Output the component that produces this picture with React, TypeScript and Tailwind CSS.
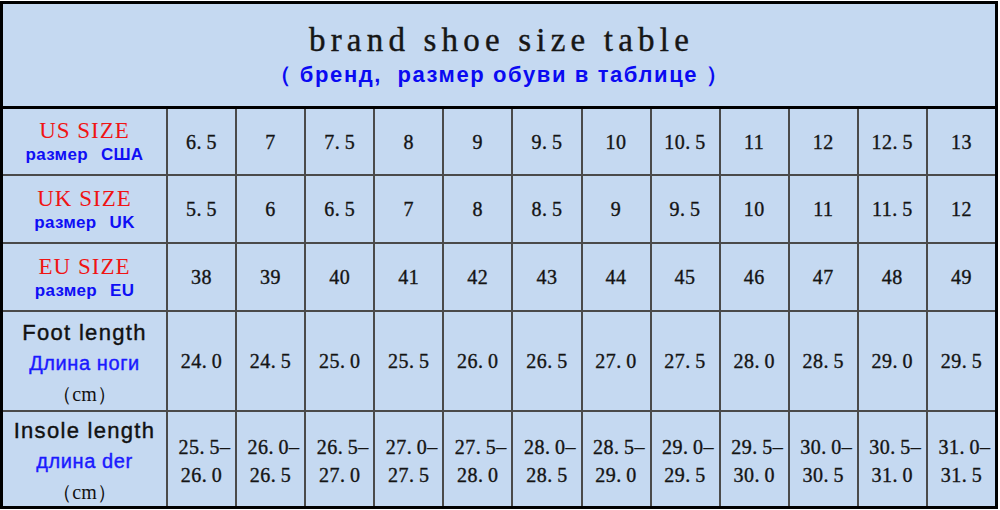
const serif = { fontFamily: '"Liberation Serif", "DejaVu Serif", serif' };
const sans = { fontFamily: '"Liberation Sans", Arial, sans-serif' };

type Row = {
  label: string;
  ru: string;
  ruTail: string;
  values: string[];
};

const sizeRows: Row[] = [
  {
    label: 'US SIZE',
    ru: 'размер',
    ruTail: 'США',
    values: ['6.5', '7', '7.5', '8', '9', '9.5', '10', '10.5', '11', '12', '12.5', '13'],
  },
  {
    label: 'UK SIZE',
    ru: 'размер',
    ruTail: 'UK',
    values: ['5.5', '6', '6.5', '7', '8', '8.5', '9', '9.5', '10', '11', '11.5', '12'],
  },
  {
    label: 'EU SIZE',
    ru: 'размер',
    ruTail: 'EU',
    values: ['38', '39', '40', '41', '42', '43', '44', '45', '46', '47', '48', '49'],
  },
];

const footLength = ['24.0', '24.5', '25.0', '25.5', '26.0', '26.5', '27.0', '27.5', '28.0', '28.5', '29.0', '29.5'];

const insoleLength = [
  ['25.5', '26.0'],
  ['26.0', '26.5'],
  ['26.5', '27.0'],
  ['27.0', '27.5'],
  ['27.5', '28.0'],
  ['28.0', '28.5'],
  ['28.5', '29.0'],
  ['29.0', '29.5'],
  ['29.5', '30.0'],
  ['30.0', '30.5'],
  ['30.5', '31.0'],
  ['31.0', '31.5'],
];

// the dot gets its own cell width, like the half-width SimSun period in the source sheet
function Num({ value }: { value: string }) {
  const [whole, frac] = value.split('.');
  if (frac === undefined) return <>{whole}</>;
  return (
    <>
      {whole}
      <span className="inline-block w-[10px]">.</span>
      {frac}
    </>
  );
}

function Cell({ children, className = '' }: { children: React.ReactNode; className?: string }) {
  return (
    <div
      className={`bg-[#c5d9f1] flex items-center justify-center text-[20px] text-[#141414] tracking-[0.5px] [-webkit-text-stroke:0.35px_#141414] ${className}`}
      style={serif}
    >
      {children}
    </div>
  );
}

function LengthLabel({ title, ru }: { title: string; ru: string }) {
  return (
    <div className="bg-[#c5d9f1] flex flex-col items-center justify-center pt-[4px]" style={sans}>
      <div className="text-[22px] leading-[29px] tracking-[1.3px] text-[#111] [-webkit-text-stroke:0.4px_#111]">
        {title}
      </div>
      <div className="text-[20px] leading-[32px] tracking-[0.6px] text-[#1a1aff] [-webkit-text-stroke:0.4px_#1a1aff]">
        {ru}
      </div>
      <div className="text-[20px] leading-[30px] text-[#111]" style={serif}>
        （cm）
      </div>
    </div>
  );
}

export default function App() {
  return (
    <div className="w-[1000px] h-[510px] bg-white pt-[1px]">
      <div className="w-[998px] h-[508px] border-[3px] border-black flex flex-col bg-[#4a4a4a]">
        {/* Title */}
        <div className="h-[102px] bg-[#c5d9f1] flex flex-col items-center pt-[17px]">
          <div
            className="text-[33px] leading-[38px] tracking-[5.2px] pl-[5px] text-[#161616] [-webkit-text-stroke:0.4px_#161616]"
            style={serif}
          >
            brand shoe size table
          </div>
          <div
            className="mt-[2px] text-[22px] leading-[28px] font-bold text-[#0a0af2] tracking-[1.6px] whitespace-pre"
            style={sans}
          >
            {'（ бренд,  размер обуви в таблице ）'}
          </div>
        </div>
        <div className="h-[3px] bg-black" />

        <div className="flex-1 grid grid-cols-[163px_repeat(12,1fr)] grid-rows-[65px_66px_66px_98px_94px] gap-[2px]">
          {sizeRows.map((row) => (
            <>
              <div key={row.label} className="bg-[#c5d9f1] flex flex-col items-center justify-center">
                <div className="text-[23px] leading-[26px] text-[#f01414] tracking-[1px]" style={serif}>
                  {row.label}
                </div>
                <div
                  className="mt-[1px] text-[17px] leading-[20px] font-bold text-[#0f0ff5] tracking-[0.3px]"
                  style={sans}
                >
                  {row.ru}
                  <span className="ml-[13px]">{row.ruTail}</span>
                </div>
              </div>
              {row.values.map((v, i) => (
                <Cell key={row.label + i}>
                  <Num value={v} />
                </Cell>
              ))}
            </>
          ))}

          <LengthLabel title="Foot length" ru="Длина ноги" />
          {footLength.map((v, i) => (
            <Cell key={'foot' + i}>
              <Num value={v} />
            </Cell>
          ))}

          <LengthLabel title="Insole length" ru="длина der" />
          {insoleLength.map(([from, to], i) => (
            <Cell key={'insole' + i} className="flex-col pt-[4px]">
              <div className="leading-[28px] pl-[6px]">
                <Num value={from} />–
              </div>
              <div className="leading-[28px]">
                <Num value={to} />
              </div>
            </Cell>
          ))}
        </div>
      </div>
    </div>
  );
}
